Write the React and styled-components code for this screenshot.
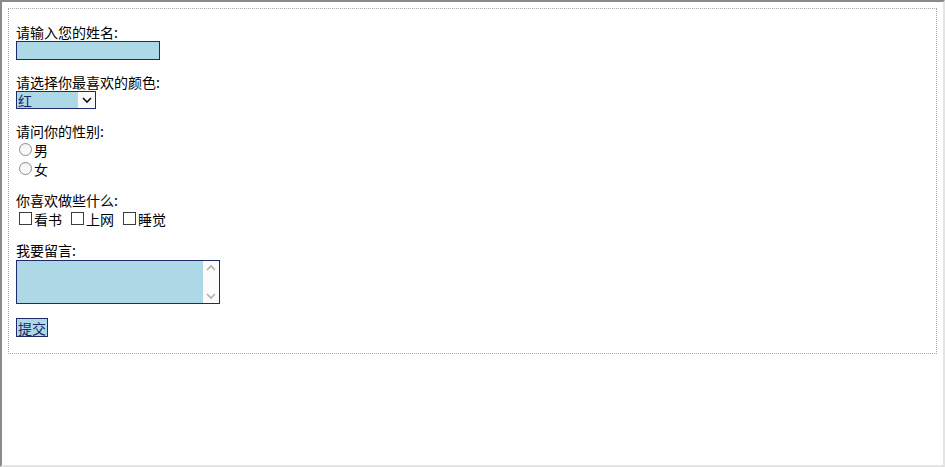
import React from 'react';
import styled, { createGlobalStyle } from 'styled-components';

const GlobalStyle = createGlobalStyle`
  html, body {
    margin: 0;
    padding: 0;
    height: 100%;
    background: #fff;
  }
  body {
    font-family: "Noto Sans CJK SC", "Liberation Sans", sans-serif;
    font-size: 14px;
    color: #000;
  }
`;

const Frame = styled.div`
  box-sizing: border-box;
  height: 100vh;
  padding: 6px;
  border-style: solid;
  border-width: 2px;
  border-top-color: #8a8a8a;
  border-left-color: #8a8a8a;
  border-right-color: #e4e4e4;
  border-bottom-color: #e4e4e4;
`;

const Form = styled.form`
  border: 1px dotted #a8a8a8;
  padding: 14px 7px 16px;
  display: flex;
  flex-direction: column;
  gap: 13px;
`;

const Group = styled.div`
  display: flex;
  flex-direction: column;
  align-items: flex-start;
`;

const Label = styled.div`
  line-height: 18px;
  height: 18px;
`;

const TextInput = styled.input`
  box-sizing: border-box;
  width: 144px;
  height: 19px;
  margin: 0;
  padding: 0 2px;
  border: 1px solid #1f2a6a;
  background: #add8e6;
  font: inherit;
  outline: none;
`;

const SelectBox = styled.div`
  box-sizing: border-box;
  width: 80px;
  height: 18px;
  display: flex;
  border: 1px solid #1f2a6a;
  background: #add8e6;
`;

const Select = styled.select`
  appearance: none;
  flex: 1;
  min-width: 0;
  margin: 0;
  padding: 0 0 0 1px;
  border: none;
  background: transparent;
  color: #1b2466;
  font: inherit;
  line-height: 16px;
  outline: none;
`;

const Arrow = styled.span`
  width: 17px;
  display: flex;
  align-items: center;
  justify-content: center;
  background: #fafafa;
  border-left: 1px solid #d0d0d0;
`;

const OptionRow = styled.label`
  display: flex;
  align-items: center;
  height: 19px;
`;

const Radio = styled.input`
  appearance: none;
  box-sizing: border-box;
  width: 13px;
  height: 13px;
  margin: 0 2px 0 3px;
  border: 1px solid #8c8c8c;
  border-radius: 50%;
  background: linear-gradient(#f2f2f2, #fff);
`;

const CheckRow = styled.div`
  display: flex;
  align-items: center;
  height: 19px;
  gap: 6px;
`;

const CheckItem = styled.label`
  display: flex;
  align-items: center;
`;

const Checkbox = styled.input`
  appearance: none;
  box-sizing: border-box;
  width: 13px;
  height: 13px;
  margin: 0 2px 0 3px;
  border: 1px solid #3c3c3c;
  background: #fff;
`;

const AreaBox = styled.div`
  box-sizing: border-box;
  width: 204px;
  height: 44px;
  margin-top: 1px;
  display: flex;
  border: 1px solid #1f2a6a;
  background: #add8e6;
`;

const TextArea = styled.textarea`
  flex: 1;
  margin: 0;
  padding: 2px;
  border: none;
  background: transparent;
  resize: none;
  font: inherit;
  outline: none;
`;

const ScrollBar = styled.div`
  width: 16px;
  background: #fcfcfc;
  display: flex;
  flex-direction: column;
  justify-content: space-between;
  align-items: center;
  padding: 3px 0;
`;

const Submit = styled.button`
  box-sizing: border-box;
  height: 19px;
  margin: 1px 0 0;
  padding: 0 1px;
  border: 1px solid #1f2a6a;
  background: #add8e6;
  color: #1b2466;
  font: inherit;
  line-height: 16px;
  cursor: pointer;
`;

const Chevron = ({ up, color = '#b0b0b0', w = 10 }) => (
  <svg width={w} height="7" viewBox="0 0 10 7">
    <path
      d={up ? 'M1 6 L5 2 L9 6' : 'M1 1 L5 5 L9 1'}
      fill="none"
      stroke={color}
      strokeWidth="1.6"
    />
  </svg>
);

export default function App() {
  return (
    <Frame>
      <GlobalStyle />
      <Form onSubmit={(e) => e.preventDefault()}>
        <Group>
          <Label>请输入您的姓名:</Label>
          <TextInput type="text" />
        </Group>
        <Group>
          <Label>请选择你最喜欢的颜色:</Label>
          <SelectBox>
            <Select defaultValue="红">
              <option>红</option>
              <option>绿</option>
              <option>蓝</option>
            </Select>
            <Arrow>
              <Chevron color="#111" w={10} />
            </Arrow>
          </SelectBox>
        </Group>
        <Group>
          <Label>请问你的性别:</Label>
          <OptionRow>
            <Radio type="radio" name="sex" />男
          </OptionRow>
          <OptionRow>
            <Radio type="radio" name="sex" />女
          </OptionRow>
        </Group>
        <Group>
          <Label>你喜欢做些什么:</Label>
          <CheckRow>
            {['看书', '上网', '睡觉'].map((t) => (
              <CheckItem key={t}>
                <Checkbox type="checkbox" />
                {t}
              </CheckItem>
            ))}
          </CheckRow>
        </Group>
        <Group>
          <Label>我要留言:</Label>
          <AreaBox>
            <TextArea />
            <ScrollBar>
              <Chevron up />
              <Chevron />
            </ScrollBar>
          </AreaBox>
        </Group>
        <Group>
          <Submit type="submit">提交</Submit>
        </Group>
      </Form>
    </Frame>
  );
}
